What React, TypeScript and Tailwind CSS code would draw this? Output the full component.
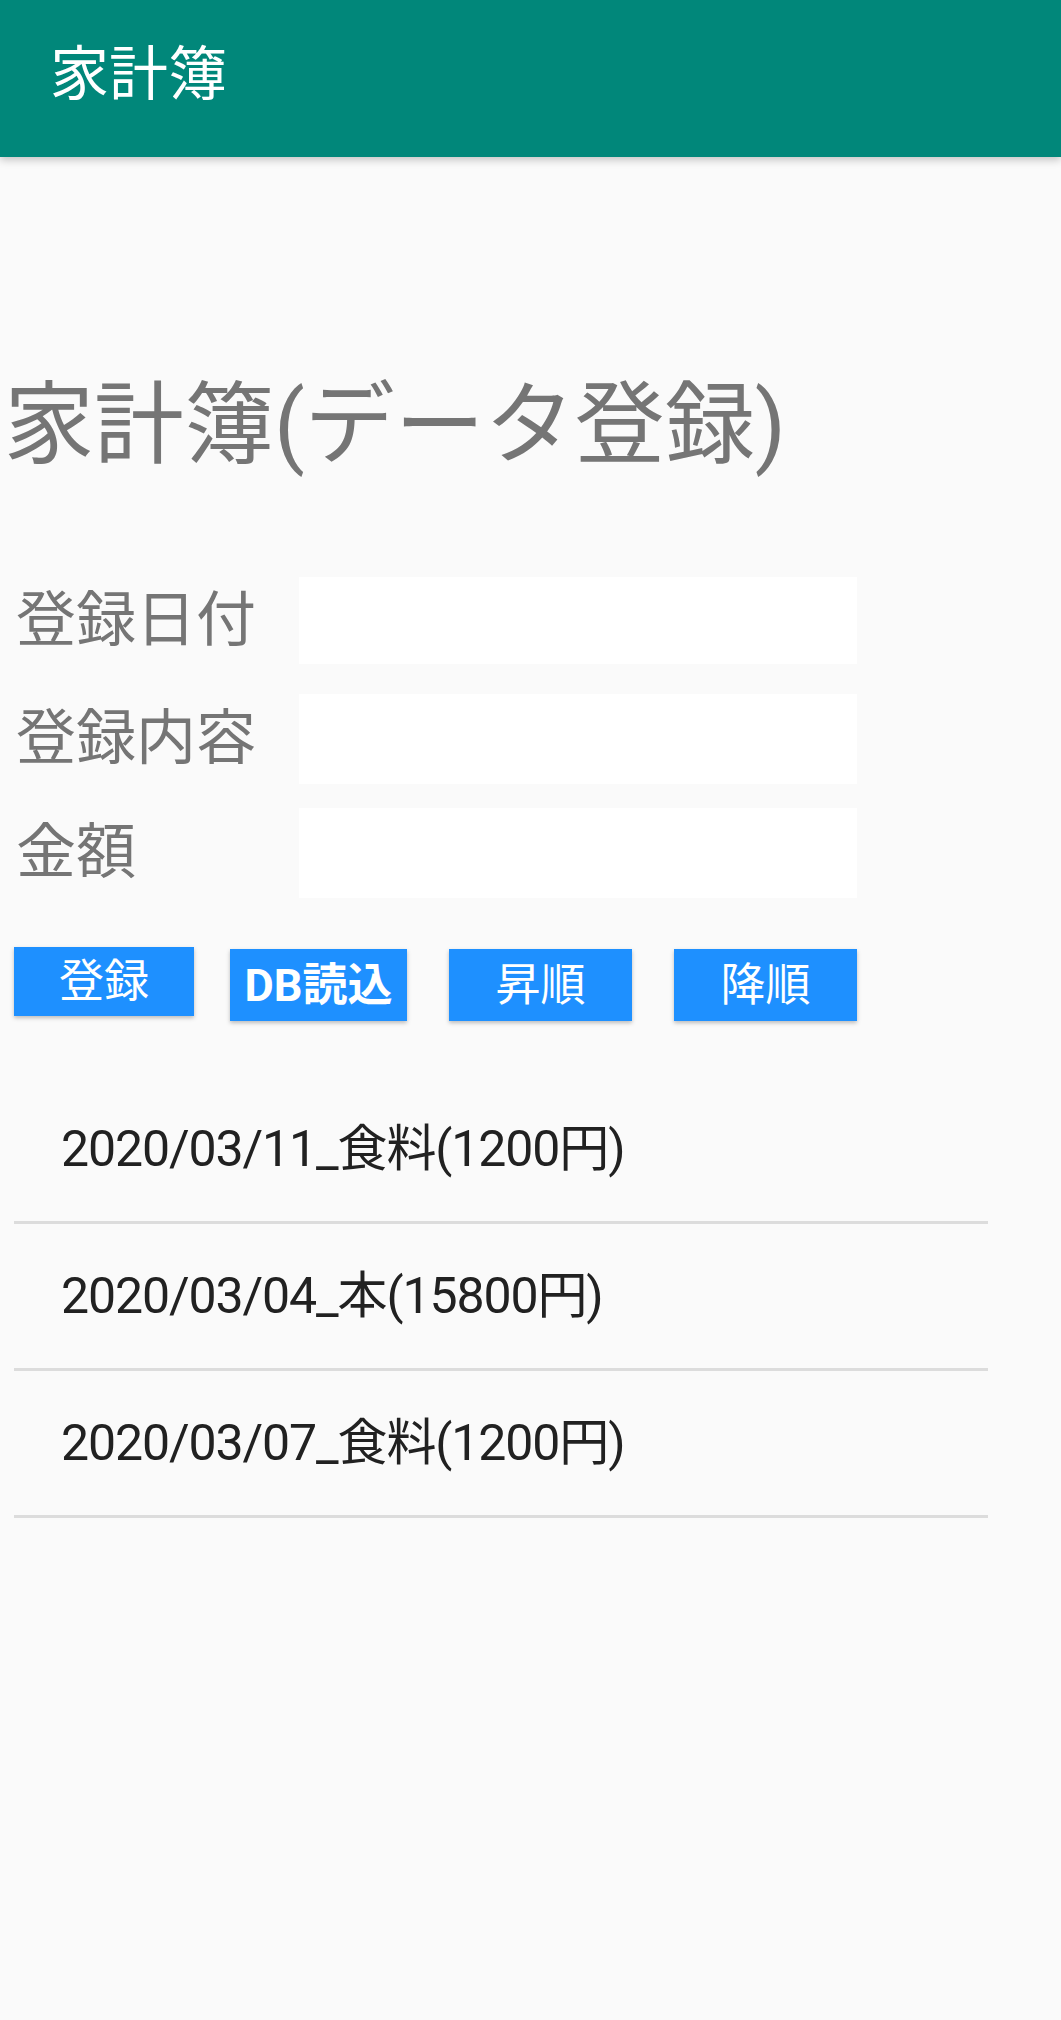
const font = "font-['Roboto','Noto_Sans_CJK_JP',sans-serif]";

const fields = [
  { label: "登録日付", box: "h-[87px]" },
  { label: "登録内容", box: "mt-[30px] h-[90px]" },
  { label: "金額", box: "mt-[24px] h-[90px]" },
];

const items = ["2020/03/11_食料(1200円)", "2020/03/04_本(15800円)", "2020/03/07_食料(1200円)"];

export default function App() {
  return (
    <div className={`min-h-screen bg-[#fafafa] ${font}`}>
      <header className="relative z-10 h-[157px] bg-[#01877a] pl-[50px] pt-[45px] shadow-[0_3px_8px_rgba(0,0,0,0.22)]">
        <h1 className="text-[59px] leading-none text-white">家計簿</h1>
      </header>

      <main>
        <h2 className="mt-[224px] pl-[4px] text-[90px] leading-none text-[#757575]">家計簿(データ登録)</h2>

        <div className="mt-[106px]">
          {fields.map(({ label, box }) => (
            <div key={label} className={`flex items-center ${box}`}>
              <span className="w-[299px] pl-[16px] text-[60px] leading-none text-[#757575]">{label}</span>
              <div className="h-full w-[558px] bg-white" />
            </div>
          ))}
        </div>

        <div className="mt-[49px] flex items-start">
          <button className="ml-[14px] flex h-[69px] w-[180px] items-center justify-center bg-[#1e90ff] text-[45px] leading-none text-white shadow-[0_2px_4px_rgba(0,0,0,0.25)]">
            登録
          </button>
          <button className="ml-[36px] mt-[2px] flex h-[72px] w-[177px] items-center justify-center bg-[#1e90ff] text-[45px] font-bold leading-none text-white shadow-[0_2px_4px_rgba(0,0,0,0.25)]">
            DB読込
          </button>
          <button className="ml-[42px] mt-[2px] flex h-[72px] w-[183px] items-center justify-center bg-[#1e90ff] text-[45px] leading-none text-white shadow-[0_2px_4px_rgba(0,0,0,0.25)]">
            昇順
          </button>
          <button className="ml-[42px] mt-[2px] flex h-[72px] w-[183px] items-center justify-center bg-[#1e90ff] text-[45px] leading-none text-white shadow-[0_2px_4px_rgba(0,0,0,0.25)]">
            降順
          </button>
        </div>

        <ul className="ml-[14px] mt-[56px] w-[974px]">
          {items.map((t) => (
            <li key={t} className="flex h-[147px] items-center border-b-[3px] border-[#dcdcdc] pl-[47px] text-[50px] leading-none tracking-[-1.1px] text-[#212121]">
              {t}
            </li>
          ))}
        </ul>
      </main>
    </div>
  );
}
